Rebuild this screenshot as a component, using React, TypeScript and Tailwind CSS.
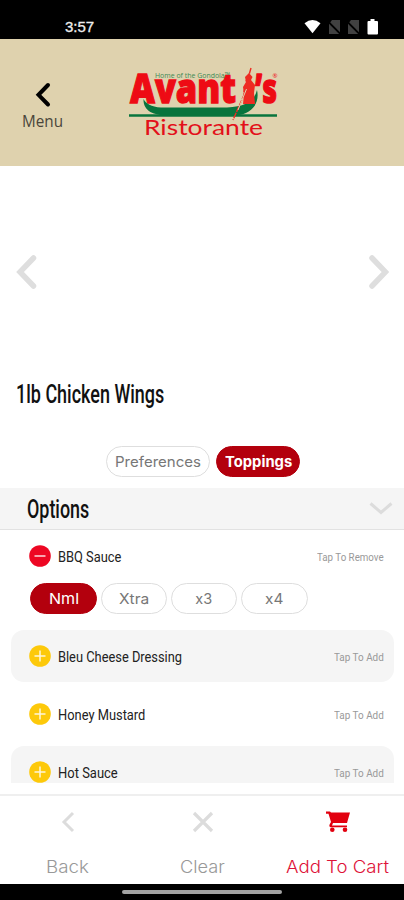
import { useLayoutEffect, useRef, useState } from "react";
import type { ReactNode } from "react";

const COND = "font-['Roboto',sans-serif]";
const ROUND = "font-['Inter','Liberation_Sans',sans-serif]";

/* One line of text squeezed or stretched to a given width. */
function Fit({ width, className = "", children }: { width: number; className?: string; children: ReactNode }) {
  const ref = useRef<HTMLSpanElement>(null);
  const [scale, setScale] = useState(1);
  useLayoutEffect(() => {
    const measure = () => {
      if (ref.current && ref.current.offsetWidth) setScale(width / ref.current.offsetWidth);
    };
    measure();
    document.fonts?.ready.then(measure);
  }, [width]);
  return (
    <span className={`block shrink-0 ${className}`} style={{ width }}>
      <span ref={ref} className="inline-block origin-left whitespace-nowrap" style={{ transform: `scaleX(${scale})` }}>
        {children}
      </span>
    </span>
  );
}

function NoSim() {
  return (
    <svg width="14" height="16" viewBox="0 0 14 16">
      <path d="M5 1h8v14H2V5z" fill="#414141" />
      <path d="M0 1.5 13.5 15" stroke="#000" strokeWidth="1.8" />
    </svg>
  );
}

function StatusBar() {
  return (
    <div className="flex h-[39px] items-center justify-between bg-black pl-[65px] pr-[25px] pt-[14px]">
      <Fit width={29} className="font-['Liberation_Sans',sans-serif] text-[15px] leading-[18px] text-[#eee] [-webkit-text-stroke:0.3px_#eee]">3:57</Fit>
      <div className="flex items-center">
        <svg width="17" height="15" viewBox="0 0 17 15">
          <path d="M.5 4.2Q8.500-2.400 16.500 4.200L8.500 14.200z" fill="#fff" />
        </svg>
        <span className="ml-[6px]"><NoSim /></span>
        <span className="ml-[5px]"><NoSim /></span>
        <svg className="ml-[7px]" width="12" height="16" viewBox="0 0 12 16">
          <path d="M3.500 0h4v2H10q1 0 1 1v11.500q0 1-1 1H1.500q-1 0-1-1V3q0-1 1-1h2z" fill="#fff" />
        </svg>
      </div>
    </div>
  );
}

function Logo() {
  return (
    <svg className="overflow-visible" width="152" height="94" viewBox="0 -12 152 94">
      <g fill="#ee0b14" stroke="#ee0b14" strokeWidth="1.300" fontFamily="Open Sans, sans-serif" fontWeight="800" fontSize="41">
        <text x="1" y="35.300" textLength="106" lengthAdjust="spacingAndGlyphs">Avant</text>
        <text x="126" y="35.300" textLength="22" lengthAdjust="spacingAndGlyphs">’s</text>
      </g>
      <text x="26" y="9.500" textLength="75" lengthAdjust="spacingAndGlyphs" fontFamily="Open Sans, sans-serif" fontSize="8" fill="#3e8a55">Home of the Gondola™</text>
      <text x="143.500" y="9.500" fontFamily="Open Sans, sans-serif" fontSize="6" fill="#ee0b14">®</text>
      <path d="M14.500 31C17 35.500 22 39 32 39.500H98C115 39 125 34 128 22C131 35 123 46 107 47.500H38C25 47.500 14 43 14.500 31Z" fill="#08743d" />
      <path d="M0 47.500H148" stroke="#08743d" strokeWidth="2.600" />
      <path d="M116 9l4-4 3.500 4-1.500 3 4 5-1 8 1 11H114l1-10-1-7 3-5z" fill="#ee2b22" />
      <path d="M122 0L120 7M117 12C120 17 114 20 115 27L104 52" fill="none" stroke="#ee2b22" strokeWidth="1.400" strokeDasharray="6 1" />
      <path d="M117.500 21L109 42" stroke="#dfd2ae" strokeWidth="1" />
      <text x="15" y="66.500" textLength="119" lengthAdjust="spacingAndGlyphs" fontFamily="Lato, sans-serif" fontSize="22" fill="#e3101a">Ristorante</text>
    </svg>
  );
}

function Header() {
  return (
    <header className="flex h-[127px] bg-[#dfd2ae]">
      <div className="ml-[22px] w-[107px] pt-[43px]">
        <svg className="ml-[12px]" width="18" height="26" viewBox="0 0 18 26">
          <path d="M14 3 4.500 12.800 14 22.500" fill="none" stroke="#000" strokeWidth="4" strokeLinecap="round" />
        </svg>
        <Fit width={41} className="mt-[1px] font-['Open_Sans',sans-serif] text-[16px] leading-[24px] text-[#4b463b]">Menu</Fit>
      </div>
      <div className="pt-[17px]"><Logo /></div>
    </header>
  );
}

function Pill({ active = false, className = "", children }: { active?: boolean; className?: string; children: ReactNode }) {
  const tone = active ? "border border-[#b3000d] bg-[#b3000d] text-white" : "border border-[#dedede] bg-white text-[#777]";
  return <button className={`flex h-[31px] items-center justify-center rounded-full ${ROUND} ${tone} ${className}`}>{children}</button>;
}

function Badge({ minus = false }: { minus?: boolean }) {
  return (
    <svg className="mb-px shrink-0" width="22" height="22" viewBox="0 0 22 22">
      <circle cx="11" cy="11" r="10.800" fill={minus ? "#ed0723" : "#fdc90a"} />
      <path d={minus ? "M5.500 11h11" : "M5.500 11h11M11 5.500v11"} stroke="#fff" strokeWidth="1.500" opacity=".85" />
    </svg>
  );
}

function Row({ name, width, shaded = false }: { name: string; width: number; shaded?: boolean }) {
  return (
    <div className={`mb-[6px] ml-[11px] mr-[10px] flex h-[52px] shrink-0 items-center rounded-[13px] pl-[18px] pr-[10px] pt-px ${shaded ? "bg-[#f5f5f5]" : ""}`}>
      <Badge />
      <Fit width={width} className={`ml-[7px] pt-[2px] ${COND} text-[14.500px] leading-5 text-[#222]`}>{name}</Fit>
      <Fit width={50} className={`ml-auto ${COND} pt-px text-[11.500px] leading-5 text-[#999]`}>Tap To Add</Fit>
    </div>
  );
}

function Action({ label, width, color, children }: { label: string; width: number; color: string; children: ReactNode }) {
  return (
    <button className={`flex w-[135px] shrink-0 flex-col items-center ${color}`}>
      <span className="flex h-[52px] items-center">{children}</span>
      <Fit width={width} className={`mt-[7px] text-left ${ROUND} text-[17px] font-light leading-6`}>{label}</Fit>
    </button>
  );
}

export default function App() {
  return (
    <div className="flex h-[900px] w-[404px] flex-col overflow-hidden bg-white">
      <StatusBar />
      <Header />
      <section className="flex h-[212px] shrink-0 items-center justify-between px-[15px]">
        <svg width="24" height="38" viewBox="0 0 24 38">
          <path d="M18.500 5 5 19l13.500 14" fill="none" stroke="#dedede" strokeWidth="5.500" strokeLinecap="round" />
        </svg>
        <svg width="24" height="38" viewBox="0 0 24 38">
          <path d="m7 5 13.500 14L7 33" fill="none" stroke="#dedede" strokeWidth="5.500" strokeLinecap="round" />
        </svg>
      </section>
      <h1 className="flex h-[32px] shrink-0 items-center pl-4">
        <Fit width={148} className={`${COND} text-[26px] font-medium leading-8 text-[#111]`}>1lb Chicken Wings</Fit>
      </h1>
      <div className="mt-[36px] flex h-[42px] shrink-0 gap-[6px] pl-[106px]">
        <Pill className="w-[104px]"><Fit width={86} className="text-left text-[14.500px]">Preferences</Fit></Pill>
        <Pill active className="w-[84px]"><Fit width={67} className="pt-px text-left text-[15px] font-bold">Toppings</Fit></Pill>
      </div>
      <div className="flex h-[42px] shrink-0 items-center justify-between border-b border-[#e2e2e2] bg-[#f5f5f5] pl-[27px] pr-[11px]">
        <Fit width={62} className={`${COND} pt-px text-[26px] font-medium leading-8 text-[#111]`}>Options</Fit>
        <svg width="24" height="16" viewBox="0 0 24 16">
          <path d="m1.500 2.500 10.500 9 10.500-9" fill="none" stroke="#dcdcdc" strokeWidth="3" />
        </svg>
      </div>
      <div className="flex h-[253px] shrink-0 flex-col overflow-hidden">
        <div className="flex h-[53px] shrink-0 items-center pl-[29px] pr-[20px]">
          <Badge minus />
          <Fit width={63} className={`ml-[7px] pt-[2px] ${COND} text-[14.500px] leading-5 text-[#222]`}>BBQ Sauce</Fit>
          <Fit width={67} className={`ml-auto ${COND} text-[11.500px] leading-5 text-[#999]`}>Tap To Remove</Fit>
        </div>
        <div className="mb-[16px] flex h-[31px] shrink-0 gap-[3.500px] pl-[30px]">
          <Pill active className="w-[67px]"><Fit width={30} className="pt-px text-left text-[15px]">Nml</Fit></Pill>
          <Pill className="w-[66.500px]"><Fit width={30} className="pt-px text-left text-[14.500px]">Xtra</Fit></Pill>
          <Pill className="w-[66.500px]"><Fit width={17} className="pt-px text-left text-[14.500px]">x3</Fit></Pill>
          <Pill className="w-[67px]"><Fit width={18} className="pt-px text-left text-[14.500px]">x4</Fit></Pill>
        </div>
        <Row name="Bleu Cheese Dressing" width={124} shaded />
        <Row name="Honey Mustard" width={87} />
        <Row name="Hot Sauce" width={60} shaded />
      </div>
      <nav className="mt-[11px] flex h-[90px] shrink-0 border-t-2 border-[#efefef]">
        <Action label="Back" width={43} color="text-[#999]">
          <svg width="14" height="22" viewBox="0 0 14 22">
            <path d="m12 2-9 9 9 9" fill="none" stroke="#dcdcdc" strokeWidth="3" />
          </svg>
        </Action>
        <Action label="Clear" width={45} color="text-[#999]">
          <svg width="22" height="22" viewBox="0 0 22 22">
            <path d="m2 2 18 18M20 2 2 20" stroke="#dcdcdc" strokeWidth="3.200" />
          </svg>
        </Action>
        <Action label="Add To Cart" width={103} color="text-[#de1238]">
          <svg width="24" height="22" viewBox="0 0 24 22" fill="#e2000f">
            <path d="M0 .5h4l1 1h19L21 12H7l-1 2.500h15v1.800H5q-2.500-.5-1.300-3L5 11 2.500 2.800H0z" />
            <circle cx="6.300" cy="18.800" r="2.300" />
            <circle cx="19" cy="18.800" r="2.300" />
          </svg>
        </Action>
      </nav>
      <div className="flex h-[16px] shrink-0 items-center justify-center bg-black">
        <div className="h-[4px] w-[160px] rounded-full bg-[#a3a3a3]" />
      </div>
    </div>
  );
}
